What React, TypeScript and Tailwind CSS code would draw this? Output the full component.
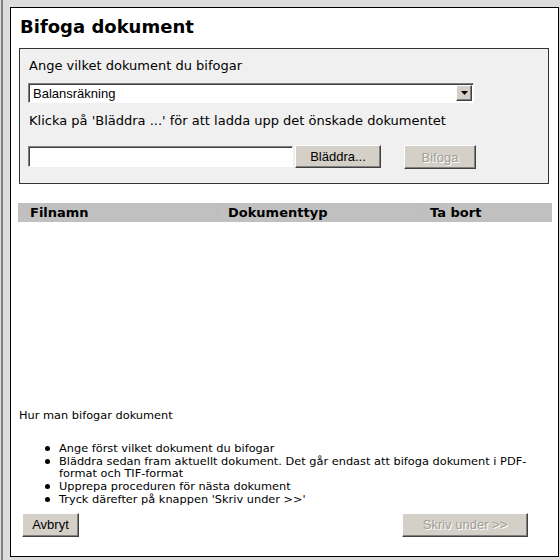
import React from 'react';

const sans = { fontFamily: '"DejaVu Sans", Verdana, sans-serif' };
const ui = { fontFamily: '"Liberation Sans", Tahoma, Arial, sans-serif' };

function WinButton({ children, disabled, className }: { children: React.ReactNode; disabled?: boolean; className?: string }) {
  return (
    <button
      disabled={disabled}
      style={ui}
      className={`bg-[#d4d0c8] border border-t-white border-l-white border-r-[#404040] border-b-[#404040] shadow-[inset_-1px_-1px_0_#808080] text-[13px] leading-none flex items-center justify-center ${
        disabled ? 'text-[#a09e94] [text-shadow:1px_1px_0_#ffffff]' : 'text-black'
      } ${className ?? ''}`}
    >
      {children}
    </button>
  );
}

const steps = [
  'Ange först vilket dokument du bifogar',
  'Bläddra sedan fram aktuellt dokument. Det går endast att bifoga dokument i PDF-format och TIF-format',
  'Upprepa proceduren för nästa dokument',
  "Tryck därefter på knappen 'Skriv under >>'",
];

export default function App() {
  return (
    <div className="h-[560px] w-[560px] bg-[#dcdcdc] flex overflow-hidden">
      <div className="w-px" />
      <div className="w-[2px] bg-[#808080]" />
      <div style={sans} className="ml-[7px] mt-[7px] w-[549px] h-[550px] shrink-0 border border-black bg-white flex flex-col text-black">
        <h1 className="ml-[9px] mt-[8px] text-[18px] leading-[22px] font-bold">Bifoga dokument</h1>

        <div className="ml-[8px] mt-[10px] w-[530px] h-[136px] border border-[#333333] bg-[#f0f0f0] pl-[9px] pt-[9px]">
          <p className="text-[13px] leading-[16px]">Ange vilket dokument du bifogar</p>
          <div className="-ml-px mt-[9px] w-[446px] h-[20px] bg-white border border-t-[#808080] border-l-[#808080] border-r-white border-b-white shadow-[inset_1px_1px_0_#404040] flex items-center justify-between">
            <span style={ui} className="pl-[4px] text-[13px] leading-none">Balansräkning</span>
            <span className="mr-px w-[16px] h-[16px] bg-[#d4d0c8] border border-t-white border-l-white border-r-[#404040] border-b-[#404040] shadow-[inset_-1px_-1px_0_#808080] flex items-center justify-center">
              <svg width="7" height="4" viewBox="0 0 7 4">
                <path d="M0 0h7L3.5 4z" fill="#000" />
              </svg>
            </span>
          </div>
          <p className="mt-[10px] text-[13px] leading-[16px]">Klicka på 'Bläddra ...' för att ladda upp det önskade dokumentet</p>
          <div className="-ml-px mt-[16px] flex items-start">
            <div className="mt-px w-[265px] h-[21px] bg-white border border-t-[#808080] border-l-[#808080] border-r-white border-b-white shadow-[inset_1px_1px_0_#404040]" />
            <WinButton className="ml-[2px] w-[86px] h-[23px]">Bläddra...</WinButton>
            <WinButton disabled className="ml-[23px] w-[72px] h-[24px]">Bifoga</WinButton>
          </div>
        </div>

        <div className="ml-[7px] mt-[19px] w-[534px] h-[19px] bg-[#c0c0c0] flex text-[13px] font-bold leading-[19px]">
          <div className="w-[199px] pl-[12px]">Filnamn</div>
          <div className="w-[201px] pl-[10px] border-l border-[#bcbcbc]">Dokumenttyp</div>
          <div className="flex-1 pl-[11px] border-l border-[#bcbcbc]">Ta bort</div>
        </div>

        <p className="ml-[8px] mt-[187px] text-[11.35px] leading-[13px]">Hur man bifogar dokument</p>

        <ul className="mt-[20px] ml-[34px] w-[500px] text-[11.35px] leading-[12.7px]">
          {steps.map((s) => (
            <li key={s} className="flex items-start">
              <span className="w-[14px] shrink-0 pt-[4px]">
                <span className="block w-[5px] h-[5px] rounded-full bg-black" />
              </span>
              <span className="w-[480px]">{s}</span>
            </li>
          ))}
        </ul>

        <div className="mt-[7px] ml-[11px] w-[506px] flex justify-between">
          <WinButton className="w-[57px] h-[24px]">Avbryt</WinButton>
          <WinButton disabled className="w-[126px] h-[24px]">Skriv under &gt;&gt;</WinButton>
        </div>
      </div>
    </div>
  );
}
